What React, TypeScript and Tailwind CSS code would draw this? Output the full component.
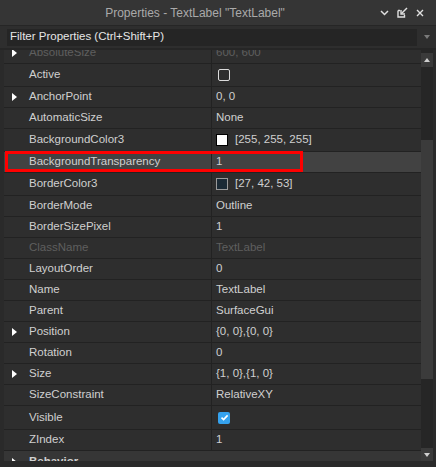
type Kind = "text" | "check" | "checked" | "color";

interface Prop {
  label: string;
  value?: string;
  kind?: Kind;
  swatch?: string;
  swatchBorder?: string;
  expand?: boolean;
  disabled?: boolean;
  h?: string;
  selected?: boolean;
}

const props: Prop[] = [
  { label: "Active", kind: "check", h: "h-[23px]" },
  { label: "AnchorPoint", value: "0, 0", expand: true },
  { label: "AutomaticSize", value: "None" },
  { label: "BackgroundColor3", value: "[255, 255, 255]", kind: "color", swatch: "bg-white", swatchBorder: "border-black", h: "h-[23px]" },
  { label: "BackgroundTransparency", value: "1", selected: true },
  { label: "BorderColor3", value: "[27, 42, 53]", kind: "color", swatch: "bg-[#1b2a35]", swatchBorder: "border-[#9a9a9a]", h: "h-[23px]" },
  { label: "BorderMode", value: "Outline" },
  { label: "BorderSizePixel", value: "1" },
  { label: "ClassName", value: "TextLabel", disabled: true },
  { label: "LayoutOrder", value: "0" },
  { label: "Name", value: "TextLabel" },
  { label: "Parent", value: "SurfaceGui" },
  { label: "Position", value: "{0, 0},{0, 0}", expand: true },
  { label: "Rotation", value: "0" },
  { label: "Size", value: "{1, 0},{1, 0}", expand: true },
  { label: "SizeConstraint", value: "RelativeXY" },
  { label: "Visible", kind: "checked", h: "h-[24px]" },
  { label: "ZIndex", value: "1" },
];

function Triangle() {
  return <span className="block w-0 h-0 border-y-[4px] border-y-transparent border-l-[5px] border-l-white" />;
}

function Value({ p }: { p: Prop }) {
  if (p.kind === "check") {
    return <span className="ml-[2px] block w-[12px] h-[12px] rounded-[2px] border border-[#dcdcdc]" />;
  }
  if (p.kind === "checked") {
    return (
      <span className="ml-[2px] flex items-center justify-center w-[12px] h-[12px] rounded-[2px] bg-[#35a2ee]">
        <svg width="9" height="9" viewBox="0 0 9 9">
          <path d="M1.5 4.6 L3.6 6.6 L7.6 2.4" fill="none" stroke="white" strokeWidth="1.6" />
        </svg>
      </span>
    );
  }
  if (p.kind === "color") {
    return (
      <span className="flex items-center gap-[7px]">
        <span className={`block w-[12px] h-[12px] border ${p.swatch} ${p.swatchBorder}`} />
        <span>{p.value}</span>
      </span>
    );
  }
  return <span>{p.value}</span>;
}

function Row({ p }: { p: Prop }) {
  const text = p.disabled ? "text-[#5f5f5f]" : "text-[#d0d0d0]";
  return (
    <div
      className={`relative flex shrink-0 border-b border-[#222222] ${p.h ?? "h-[21px]"} ${p.selected ? "bg-[#424242]" : ""} ${text}`}
    >
      <div className="flex items-center w-[208px] border-r border-[#222222]">
        <div className="w-[25px] pl-[8px]">{p.expand && <Triangle />}</div>
        <span>{p.label}</span>
      </div>
      <div className="flex items-center pl-[4px]">
        <Value p={p} />
      </div>
      {p.selected && (
        <div className="absolute left-[1px] top-[-1px] w-[298px] h-[21px] border-[3px] border-[#ff0000]" />
      )}
    </div>
  );
}

export default function App() {
  return (
    <div
      className="w-[436px] h-[467px] flex flex-col bg-[#2a2a2a] overflow-hidden text-[11.5px] leading-none"
      style={{ fontFamily: '"Liberation Sans", Arial, sans-serif' }}
    >
      {/* title bar */}
      <div className="flex items-center h-[26px] shrink-0 bg-[#353535] border-b border-[#262626]">
        <div className="flex-1 pl-[10px] text-center text-[12px] text-[#aaaaaa]">Properties - TextLabel "TextLabel"</div>
        <div className="flex items-center gap-[8px] pr-[12px] text-[#e0e0e0]">
          <svg width="9" height="6" viewBox="0 0 9 6">
            <path d="M1 1 L4.5 4.5 L8 1" fill="none" stroke="currentColor" strokeWidth="1.5" />
          </svg>
          <svg width="11" height="11" viewBox="0 0 11 11">
            <path d="M1 3.5 V10 H7.5 V8" fill="none" stroke="currentColor" strokeWidth="1.4" />
            <path d="M1 3.5 H3" fill="none" stroke="currentColor" strokeWidth="1.4" />
            <path d="M10 1 L4.5 6.5" fill="none" stroke="currentColor" strokeWidth="1.4" />
            <path d="M4 3 V7 H8" fill="none" stroke="currentColor" strokeWidth="1.4" />
          </svg>
          <svg width="8" height="8" viewBox="0 0 8 8">
            <path d="M1 1 L7 7 M7 1 L1 7" fill="none" stroke="currentColor" strokeWidth="1.4" />
          </svg>
        </div>
      </div>

      {/* filter */}
      <div className="flex items-center h-[22px] shrink-0 bg-[#2e2e2e] pl-[7px]">
        <div className="flex items-center w-[410px] h-[17px] bg-[#252525] pl-[3px] text-[#e6e6e6]">
          Filter Properties (Ctrl+Shift+P)
        </div>
        <div className="flex-1 flex justify-center">
          <span className="block w-0 h-0 border-x-[3.5px] border-x-transparent border-t-[4px] border-t-[#7a7a7a]" />
        </div>
      </div>
      <div className="h-[2px] shrink-0 bg-[#262626]" />

      {/* list */}
      <div className="flex h-[411px] shrink-0 pl-[4px]">
        <div className="w-[417px] overflow-hidden bg-[#2e2e2e] flex flex-col">
          <div className="mt-[-7px] flex shrink-0 h-[21px] border-b border-[#222222] text-[#5f5f5f]">
            <div className="flex items-center w-[208px] border-r border-[#222222]">
              <div className="w-[25px] pl-[8px]">
                <Triangle />
              </div>
              <span>AbsoluteSize</span>
            </div>
            <div className="flex items-center pl-[4px]">600, 600</div>
          </div>
          {props.map((p) => (
            <Row key={p.label} p={p} />
          ))}
          <div className="flex items-center shrink-0 h-[21px] bg-[#363636] text-[#d0d0d0] font-bold">
            <div className="w-[25px] pl-[8px]">
              <Triangle />
            </div>
            <span>Behavior</span>
          </div>
        </div>

        {/* scrollbar */}
        <div className="flex flex-col w-[12px] bg-[#262626] pt-[3px]">
          <div className="flex items-center justify-center h-[14px] bg-[#3a3a3a]">
            <span className="block w-0 h-0 border-x-[3.5px] border-x-transparent border-b-[4px] border-b-[#cfcfcf]" />
          </div>
          <div className="h-[73px]" />
          <div className="h-[239px] bg-[#3b3b3b]" />
          <div className="flex-1" />
          <div className="flex items-center justify-center h-[13px] bg-[#3a3a3a]">
            <span className="block w-0 h-0 border-x-[3.5px] border-x-transparent border-t-[4px] border-t-[#cfcfcf]" />
          </div>
        </div>
      </div>
    </div>
  );
}
